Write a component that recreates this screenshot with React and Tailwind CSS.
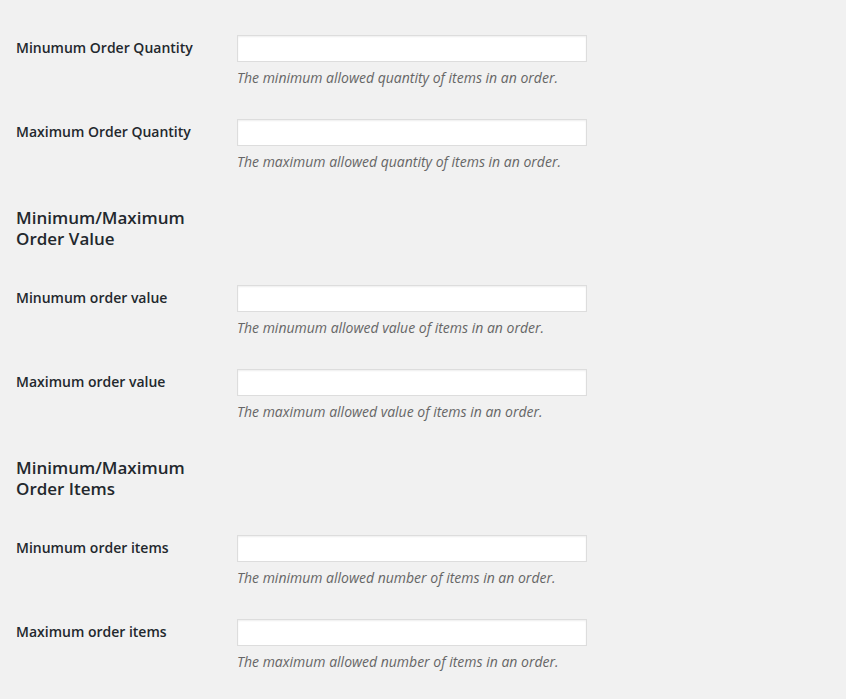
const sections = [
  {
    rows: [
      { label: "Minumum Order Quantity", desc: "The minimum allowed quantity of items in an order." },
      { label: "Maximum Order Quantity", desc: "The maximum allowed quantity of items in an order." },
    ],
  },
  {
    title: "Minimum/Maximum Order Value",
    rows: [
      { label: "Minumum order value", desc: "The minumum allowed value of items in an order." },
      { label: "Maximum order value", desc: "The maximum allowed value of items in an order." },
    ],
  },
  {
    title: "Minimum/Maximum Order Items",
    rows: [
      { label: "Minumum order items", desc: "The minimum allowed number of items in an order." },
      { label: "Maximum order items", desc: "The maximum allowed number of items in an order." },
    ],
  },
];

function FieldRow({ label, desc }) {
  return (
    <div className="flex">
      <div className="w-[210px] shrink-0 pt-[21px] pr-[10px]">
        <label className="block text-[14px] leading-[18px] font-semibold text-[#23282d]">{label}</label>
      </div>
      <div className="pt-[17px] pb-[14px] pl-[11px]">
        <input
          type="text"
          className="block w-[350px] h-[27px] bg-white border border-[#dddddd] shadow-[inset_0_1px_2px_rgba(0,0,0,0.07)] outline-none px-2 text-[14px]"
        />
        <p className="mt-[6px] text-[14px] leading-[20px] italic text-[#666666]">{desc}</p>
      </div>
    </div>
  );
}

export default function App() {
  return (
    <div className="min-h-screen bg-[#f1f1f1] pl-[16px] pt-[18px] font-['Open_Sans',sans-serif]">
      {sections.map((s, i) => (
        <div key={i}>
          {s.title && (
            <h2 className="w-[200px] mt-[21px] mb-[19px] text-[17px] leading-[21px] font-semibold text-[#23282d]">
              {s.title}
            </h2>
          )}
          {s.rows.map((r) => (
            <FieldRow key={r.label} {...r} />
          ))}
        </div>
      ))}
    </div>
  );
}
